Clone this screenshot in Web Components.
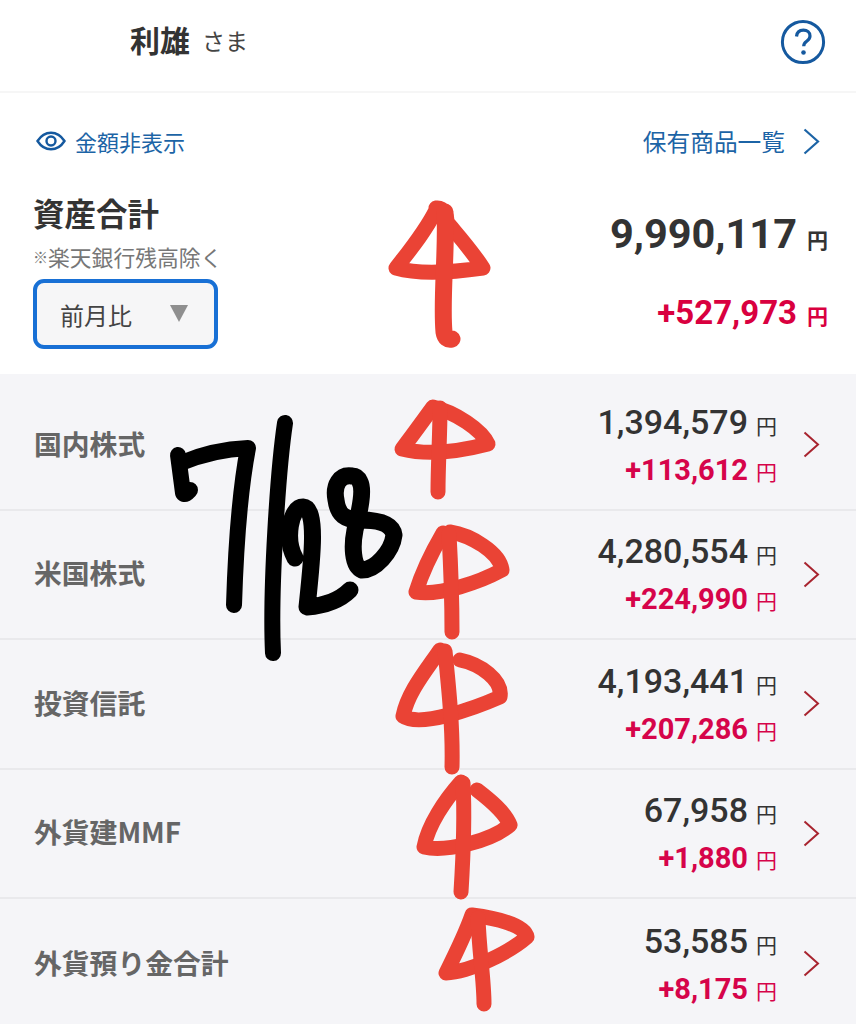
<!DOCTYPE html>
<html lang="ja">
<head>
<meta charset="utf-8">
<title>資産合計</title>
<style>
  html, body { margin: 0; padding: 0; background: #fff; }
  body {
    width: 856px;
    height: 1024px;
    overflow: hidden;
    position: relative;
    font-family: Roboto, "Noto Sans CJK JP", sans-serif;
    color: #333;
  }
</style>
</head>
<body>
<app-header name="利雄" suffix="さま"></app-header>
<asset-summary total="9,990,117" diff="+527,973"></asset-summary>
<asset-list>
  <asset-row label="国内株式" value="1,394,579" diff="+113,612"></asset-row>
  <asset-row label="米国株式" value="4,280,554" diff="+224,990"></asset-row>
  <asset-row label="投資信託" value="4,193,441" diff="+207,286"></asset-row>
  <asset-row label="外貨建MMF" value="67,958" diff="+1,880"></asset-row>
  <asset-row label="外貨預り金合計" value="53,585" diff="+8,175"></asset-row>
</asset-list>
<ink-marks></ink-marks>

<script>
const JP = `"Noto Sans CJK JP", sans-serif`;
const NUM = `Roboto, "Noto Sans CJK JP", sans-serif`;

class AppHeader extends HTMLElement {
  connectedCallback() {
    const shadow = this.attachShadow({ mode: "open" });
    shadow.innerHTML = `
      <style>
        :host {
          display: flex;
          align-items: center;
          box-sizing: border-box;
          height: 93px;
          padding: 0 30px 8px 130px;
          border-bottom: 2px solid #f6f6f6;
          font-family: ${JP};
        }
        .name { font-size: 30px; font-weight: 700; color: #333; line-height: 1; margin-bottom: 5px; }
        .suffix { font-size: 23px; color: #444; margin-left: 12px; line-height: 1; flex: 1; margin-bottom: 2px; }
        svg { display: block; width: 46px; height: 46px; }
      </style>
      <span class="name">${this.getAttribute("name")}</span>
      <span class="suffix">${this.getAttribute("suffix")}</span>
      <svg viewBox="0 0 46 46" fill="none">
        <circle cx="23" cy="23" r="20.6" stroke="#15599f" stroke-width="3"/>
        <path d="M16.5 17.5c.4-4 3.200-6.300 6.900-6.300 3.900 0 6.600 2.400 6.600 5.700 0 2.700-1.500 4-3.300 5.300-2 1.400-3 2.500-3 5" stroke="#15599f" stroke-width="3.200"/>
        <circle cx="23.500" cy="33.500" r="2.300" fill="#15599f"/>
      </svg>`;
  }
}

class AssetSummary extends HTMLElement {
  connectedCallback() {
    const shadow = this.attachShadow({ mode: "open" });
    shadow.innerHTML = `
      <style>
        :host {
          display: block;
          height: 281px;
          box-sizing: border-box;
          padding: 33px 28px 0 33px;
          font-family: ${JP};
        }
        .links { display: flex; align-items: center; height: 30px; color: #1c64a6; }
        .toggle { display: flex; align-items: center; gap: 9px; font-size: 22px; flex: 1; }
        .toggle svg { display: block; width: 30px; height: 22px; margin-left: 3px; }
        .more { display: flex; align-items: center; gap: 18px; font-size: 23.700px; margin-right: 8px; }
        .more svg { display: block; width: 17px; height: 27px; }
        .body { display: flex; justify-content: space-between; }
        .left { padding-top: 33px; }
        h2 { margin: 0; font-size: 31.500px; font-weight: 700; line-height: 46px; color: #333; }
        .note { display: flex; align-items: center; font-size: 21.800px; line-height: 34px; color: #777; white-space: nowrap; margin-top: 5px; }
        .note b { display: block; width: 15px; font-size: 15px; font-weight: 400; }
        .select {
          display: flex;
          align-items: center;
          justify-content: space-between;
          box-sizing: border-box;
          width: 185px;
          height: 70px;
          margin-top: 5px;
          padding: 0 26px 0 23px;
          border: 4px solid #1870d5;
          border-radius: 11px;
          background: #f6f6f7;
          font-size: 24px;
          color: #444;
        }
        .select i {
          display: block;
          width: 0;
          height: 0;
          border-left: 9.500px solid transparent;
          border-right: 9.500px solid transparent;
          border-top: 17px solid #8f8f8f;
          margin-top: -1px;
        }
        .right { display: flex; flex-direction: column; align-items: flex-end; padding-top: 51px; font-family: ${NUM}; }
        .total, .diff { display: flex; align-items: baseline; font-weight: 700; }
        .total { font-size: 41.500px; line-height: 54px; color: #333; }
        .diff { font-size: 33px; line-height: 44px; color: #d9003f; margin-top: 25px; }
        .unit { font-size: 21px; font-weight: 700; margin-left: 10px; font-family: ${JP}; }
      </style>
      <div class="links">
        <span class="toggle">
          <svg viewBox="0 0 30 22" fill="none" stroke="#15599f" stroke-width="2.400">
            <path d="M1.500 11C5 5.500 9.500 2.700 15 2.700S25 5.500 28.500 11C25 16.500 20.500 19.300 15 19.300S5 16.500 1.500 11Z"/>
            <circle cx="15" cy="11" r="4.500"/>
          </svg>
          金額非表示
        </span>
        <span class="more">保有商品一覧
          <svg viewBox="0 0 17 27" fill="none" stroke="#1c64a6" stroke-width="2.200"><path d="M1.500 1.500 15 13.500 1.500 25.500"/></svg>
        </span>
      </div>
      <div class="body">
        <div class="left">
          <h2>資産合計</h2>
          <div class="note"><b>※</b>楽天銀行残高除く</div>
          <div class="select">前月比<i></i></div>
        </div>
        <div class="right">
          <div class="total">${this.getAttribute("total")}<span class="unit">円</span></div>
          <div class="diff">${this.getAttribute("diff")}<span class="unit">円</span></div>
        </div>
      </div>`;
  }
}

class AssetList extends HTMLElement {
  connectedCallback() {
    const shadow = this.attachShadow({ mode: "open" });
    shadow.innerHTML = `
      <style>
        :host { display: block; background: #f5f5f8; padding-top: 7px; }
      </style>
      <slot></slot>`;
  }
}

class AssetRow extends HTMLElement {
  connectedCallback() {
    const shadow = this.attachShadow({ mode: "open" });
    shadow.innerHTML = `
      <style>
        :host {
          display: flex;
          align-items: center;
          box-sizing: border-box;
          height: 129.500px;
          padding: 0 36px 0 34px;
          border-bottom: 2px solid #e9e9ec;
          font-family: ${JP};
        }
        :host(:last-child) { border-bottom: none; }
        .label { flex: 1; font-size: 27.800px; font-weight: 700; color: #666; padding-bottom: 4px; }
        .values { display: flex; flex-direction: column; align-items: flex-end; padding-top: 3px; font-family: ${NUM}; }
        .value, .diff { display: flex; align-items: baseline; }
        .value { font-size: 34px; line-height: 42px; color: #333; font-weight: 500; }
        .diff { font-size: 29px; line-height: 42px; color: #d6044a; font-weight: 700; margin-top: 3px; }
        .unit { font-size: 21px; font-weight: 400; margin-left: 8px; font-family: ${JP}; }
        svg { display: block; width: 17px; height: 27px; margin-left: 26px; }
      </style>
      <div class="label">${this.getAttribute("label")}</div>
      <div class="values">
        <div class="value">${this.getAttribute("value")}<span class="unit">円</span></div>
        <div class="diff">${this.getAttribute("diff")}<span class="unit">円</span></div>
      </div>
      <svg viewBox="0 0 17 27" fill="none" stroke="#a8242f" stroke-width="2"><path d="M1.500 1.500 15 13.500 1.500 25.500"/></svg>`;
  }
}

// handwritten marks drawn on top of the screenshot
class InkMarks extends HTMLElement {
  connectedCallback() {
    const shadow = this.attachShadow({ mode: "open" });
    shadow.innerHTML = `
      <style>
        :host { position: absolute; left: 0; top: 0; width: 856px; height: 1024px; pointer-events: none; }
        svg { display: block; }
        .red { stroke: #ea4335; stroke-width: 15; fill: none; stroke-linecap: round; stroke-linejoin: round; }
        .black { stroke: #000; stroke-width: 16; fill: none; stroke-linecap: round; stroke-linejoin: round; }
      </style>
      <svg width="856" height="1024" viewBox="0 0 856 1024">
        <g class="red">
          <path d="M436 210C425 232 410 250 396 268C420 275 455 272 483 268C470 248 455 232 447 222C447 216 444 207 436 208"/>
          <path stroke-width="17" d="M445 212C447 250 441 300 444 332C445 338 448 340 452 339"/>
          <path d="M433 407C422 422 412 436 402 449C430 456 465 450 488 444C482 430 455 412 433 407Z"/>
          <path d="M440 408C440 435 438 465 438 492"/>
          <path d="M443 533C432 552 422 572 416 592C440 596 480 582 502 570C500 552 470 535 450 532"/>
          <path d="M449 534C451 570 452 600 452 632"/>
          <path d="M440 650C425 672 408 692 403 716C420 728 475 708 500 697C503 680 480 664 460 660"/>
          <path d="M445 651C449 690 453 730 452 767"/>
          <path d="M461 782C445 800 428 825 424 847C445 852 490 842 510 825C505 812 490 800 477 790"/>
          <path d="M463 783C465 820 463 860 461 892"/>
          <path d="M472 915C465 935 455 955 446 973C470 972 510 952 527 937C525 925 495 918 472 915Z"/>
          <path d="M478 918C479 950 484 980 484 1004"/>
        </g>
        <g class="black">
          <path d="M178 455L183 493C185 496 188 492 190 490"/>
          <path d="M181 463C200 455 225 449 248 448C240 490 236 540 234 605"/>
          <path d="M285 423C278 470 270 590 273 653"/>
          <path stroke-width="17" d="M295 558C285 540 290 507 303 507C318 508 312 560 307 607C320 606 338 602 350 590"/>
          <path stroke-width="17" d="M352 476C340 474 333 485 336 500C338 515 345 520 360 520C375 520 392 522 394 535C392 552 375 570 362 570C352 566 352 545 355 530C360 510 364 490 360 482C358 477 355 476 352 476Z"/>
        </g>
      </svg>`;
  }
}

customElements.define("app-header", AppHeader);
customElements.define("asset-summary", AssetSummary);
customElements.define("asset-list", AssetList);
customElements.define("asset-row", AssetRow);
customElements.define("ink-marks", InkMarks);
</script>
</body>
</html>
